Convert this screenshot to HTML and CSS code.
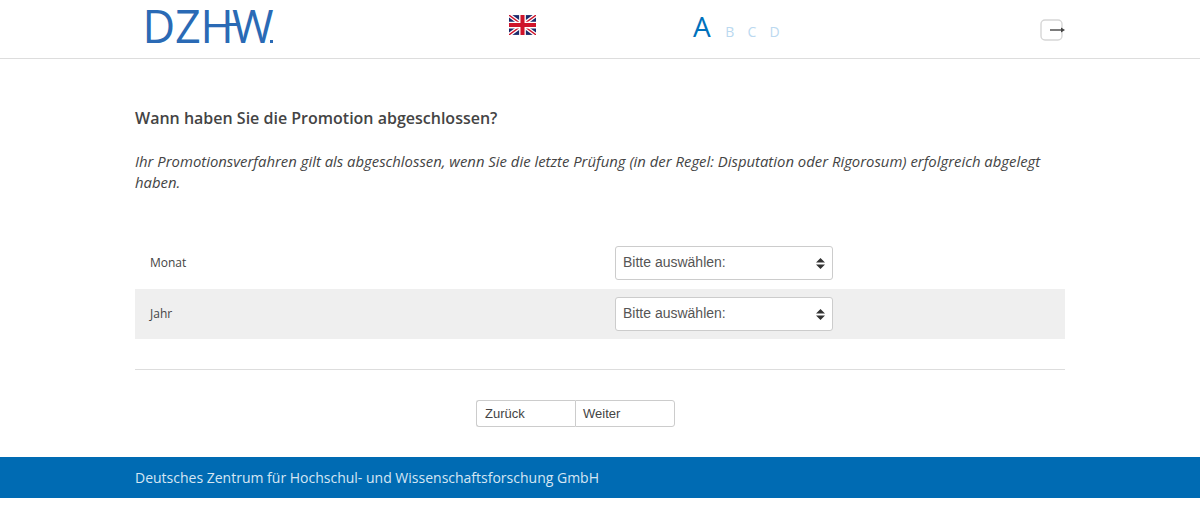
FILE: index.html
```html
<!DOCTYPE html>
<html lang="de">
<head>
<meta charset="utf-8">
<title>DZHW</title>
<link rel="stylesheet" href="styles.css">
</head>
<body>
<header class="top">
  <div class="top-inner">
    <svg class="logo" width="140" height="54" viewBox="0 0 140 54" role="img" aria-label="DZHW">
      <text class="logo-text" x="2.500 35 60.500 92" y="43">DZHW</text>
      <rect class="logo-mark" x="88" y="23" width="12" height="3"/>
      <rect class="logo-mark" x="130" y="40" width="3" height="3"/>
    </svg>
    <svg class="flag" width="27" height="20" viewBox="0 0 60 44" role="img" aria-label="English">
      <rect width="60" height="44" fill="#1b2a6b"/>
      <path d="M0 0L60 44M60 0L0 44" stroke="#fff" stroke-width="9"/>
      <path d="M0 0L60 44M60 0L0 44" stroke="#cf142b" stroke-width="3"/>
      <path d="M30 0V44M0 22H60" stroke="#fff" stroke-width="15"/>
      <path d="M30 0V44M0 22H60" stroke="#cf142b" stroke-width="9"/>
    </svg>
    <nav class="steps">
      <span class="step step-active">A</span>
      <span class="step">B</span>
      <span class="step">C</span>
      <span class="step">D</span>
    </nav>
    <svg class="exit" width="25" height="22" viewBox="0 0 25 22" role="img" aria-label="Abmelden">
      <rect x="1" y="1" width="21" height="20" rx="4" fill="#fff" stroke="#d6d6d6" stroke-width="1.4"/>
      <path d="M10 11H22" stroke="#444" stroke-width="1.4"/>
      <path d="M21 8.5L25 11L21 13.5Z" fill="#444"/>
    </svg>
  </div>
</header>
<main class="content">
  <h1 class="question">Wann haben Sie die Promotion abgeschlossen?</h1>
  <p class="hint">Ihr Promotionsverfahren gilt als abgeschlossen, wenn Sie die letzte Prüfung (in der Regel: Disputation oder Rigorosum) erfolgreich abgelegt haben.</p>
  <div class="rows">
    <div class="row">
      <label class="row-label" for="monat">Monat</label>
      <select class="field" id="monat"><option>Bitte auswählen:</option></select>
    </div>
    <div class="row row-alt">
      <label class="row-label" for="jahr">Jahr</label>
      <select class="field" id="jahr"><option>Bitte auswählen:</option></select>
    </div>
  </div>
  <hr class="rule">
  <div class="actions">
    <button class="btn btn-first" type="button">Zurück</button><button class="btn btn-last" type="button">Weiter</button>
  </div>
</main>
<footer class="foot">
  <div class="foot-inner">Deutsches Zentrum für Hochschul- und Wissenschaftsforschung GmbH</div>
</footer>
</body>
</html>
```
FILE: styles.css
```css
* { box-sizing: border-box; }
html, body { margin: 0; padding: 0; }
body {
  background: #fff;
  color: #444;
  font-family: "Open Sans", sans-serif;
  font-size: 14px;
  height: 507px;
  overflow: hidden;
}
.top {
  height: 59px;
  border-bottom: 1px solid #ddd;
}
.top-inner {
  width: 930px;
  margin: 0 auto;
  height: 58px;
  display: flex;
  align-items: flex-start;
}
.logo { margin: 0 0 0 5px; flex: none; }
.logo-text {
  font-family: "Open Sans", sans-serif;
  font-weight: 400;
  font-size: 45px;
  fill: #2a6ab5;
}
.logo-mark { fill: #2a6ab5; }
.flag { margin: 15px 0 0 229px; flex: none; }
.steps {
  display: flex;
  align-items: baseline;
  margin: 7px 0 0 157px;
  gap: 13.2px;
  flex: none;
}
.step { font-size: 14px; color: #bbd9f0; width: 9px; }
.step-active { font-size: 28px; color: #0071bc; width: 19px; }
.exit { margin: 19px 0 0 auto; flex: none; }
.content {
  width: 930px;
  margin: 0 auto;
}
.question {
  margin: 0;
  padding-top: 48px;
  font-size: 16px;
  line-height: 22px;
  font-weight: 600;
  color: #444;
}
.hint {
  margin: 22px 0 0;
  font-style: italic;
  font-size: 14.86px;
  line-height: 21px;
  color: #444;
}
.rows { margin-top: 45px; }
.row {
  display: flex;
  align-items: flex-start;
  height: 50px;
  padding: 8px 0 0 15px;
}
.row + .row { margin-top: 1px; }
.row-alt { background: #efefef; }
.row-label {
  width: 465px;
  font-size: 12px;
  line-height: 34px;
  color: #444;
}
.field {
  appearance: none;
  width: 218px;
  height: 34px;
  padding: 4px 24px 6px 7px;
  border: 1px solid #ccc;
  border-radius: 3px;
  color: #555;
  font-family: "Liberation Sans", sans-serif;
  font-size: 14px;
  background: #fff url("data:image/svg+xml,%3Csvg xmlns='http://www.w3.org/2000/svg' width='9' height='11'%3E%3Cpath d='M4.5 0L9 4.5H0ZM4.5 11L0 6.500H9Z' fill='%23333'/%3E%3C/svg%3E") no-repeat right 7px center;
}
.rule {
  margin: 30px 0 0;
  border: 0;
  border-top: 1px solid #ddd;
}
.actions {
  display: flex;
  justify-content: center;
  margin: 30px 49px 0 0;
}
.btn {
  width: 100px;
  height: 27px;
  padding: 0 7px;
  text-align: left;
  background: #fff;
  border: 1px solid #ccc;
  color: #444;
  font-family: "Liberation Sans", sans-serif;
  font-size: 13px;
}
.btn-first {
  width: 99px;
  padding-left: 8px;
  border-radius: 3px 0 0 3px;
  border-right: 0;
}
.btn-last { border-radius: 0 3px 3px 0; }
.foot {
  margin-top: 30px;
  height: 41px;
  background: #006bb3;
}
.foot-inner {
  width: 930px;
  margin: 0 auto;
  color: #d5e6f3;
  font-size: 14px;
  line-height: 41px;
}
```
